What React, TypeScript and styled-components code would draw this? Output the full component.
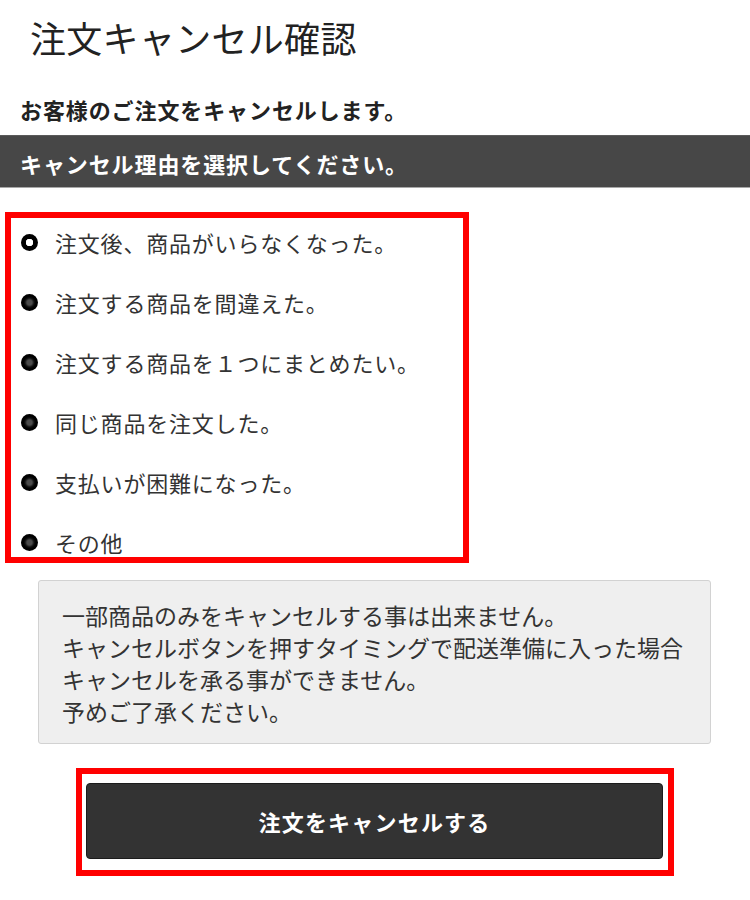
import styled, { createGlobalStyle } from "styled-components";

const GlobalStyle = createGlobalStyle`
    body {
        margin: 0;
        background: #ffffff;
        font-family: "Noto Sans CJK JP", "Noto Sans", sans-serif;
        color: #333333;
    }
`;

const Page = styled.div`
    width: 750px;
    display: flex;
    flex-direction: column;
`;

const Title = styled.h1`
    margin: 0;
    padding-left: 30px;
    font-size: 36px;
    font-weight: 400;
    line-height: 74px;
    letter-spacing: 0.3px;
    color: #222222;
`;

const Lead = styled.p`
    margin: 20px 0 11px;
    padding-left: 20px;
    font-size: 22px;
    font-weight: 700;
    line-height: 30px;
    letter-spacing: 0.9px;
    color: #222222;
`;

const SectionBar = styled.div`
    height: 53px;
    display: flex;
    align-items: center;
    padding: 3px 0 0 20px;
    background: #474747;
    border-top: 1px solid #5a5a5a;
    border-bottom: 1px solid #a8a8a8;
    box-sizing: border-box;
    color: #ffffff;
    font-size: 22px;
    font-weight: 700;
    letter-spacing: 0.9px;
`;

const Highlight = styled.div<{ $left: number; $width: number; $top: number }>`
    margin: ${(p) => p.$top}px 0 0 ${(p) => p.$left}px;
    width: ${(p) => p.$width}px;
    border: 6px solid #ff0000;
    box-sizing: border-box;
`;

const ReasonList = styled.div`
    display: flex;
    flex-direction: column;
    gap: 30px;
    padding: 9px 0 0 10px;
`;

const Reason = styled.label`
    height: 30px;
    display: flex;
    align-items: center;
    gap: 17px;
    font-size: 22px;
    line-height: 30px;
    letter-spacing: 0.8px;
    color: #333333;
    cursor: pointer;
`;

const Radio = styled.span<{ $checked?: boolean }>`
    width: 17px;
    height: 17px;
    border-radius: 50%;
    flex-shrink: 0;
    box-sizing: border-box;
    background: ${(p) =>
        p.$checked
            ? "radial-gradient(circle, #ffffff 0 3.5px, #000000 4px)"
            : "radial-gradient(circle, #4a4a4a 0 2.5px, #111111 4.5px, #000000 6px)"};
`;

const Notice = styled.div`
    margin: 17px 0 0 38px;
    width: 673px;
    height: 164px;
    box-sizing: border-box;
    padding: 18px 0 0 23px;
    background: #efefef;
    border: 1px solid #d2d2d2;
    border-radius: 3px;
    font-size: 23px;
    line-height: 32px;
    color: #333333;
`;

const ButtonArea = styled.div`
    padding: 9px 0 11px 4px;
`;

const CancelButton = styled.button`
    width: 577px;
    height: 76px;
    background: #333333;
    border: 1px solid #1c1c1c;
    border-radius: 4px;
    color: #ffffff;
    font-family: "Noto Sans CJK JP", "Noto Sans", sans-serif;
    font-size: 22px;
    font-weight: 700;
    letter-spacing: 1.2px;
    cursor: pointer;
`;

const reasons = [
    "注文後、商品がいらなくなった。",
    "注文する商品を間違えた。",
    "注文する商品を１つにまとめたい。",
    "同じ商品を注文した。",
    "支払いが困難になった。",
    "その他",
];

export default function App() {
    return (
        <>
            <GlobalStyle />
            <Page>
                <Title>注文キャンセル確認</Title>
                <Lead>お客様のご注文をキャンセルします。</Lead>
                <SectionBar>キャンセル理由を選択してください。</SectionBar>

                <Highlight $left={5} $width={464} $top={24}>
                    <ReasonList>
                        {reasons.map((r, i) => (
                            <Reason key={r}>
                                <Radio $checked={i === 0} />
                                {r}
                            </Reason>
                        ))}
                    </ReasonList>
                </Highlight>

                <Notice>
                    一部商品のみをキャンセルする事は出来ません。
                    <br />
                    キャンセルボタンを押すタイミングで配送準備に入った場合
                    <br />
                    キャンセルを承る事ができません。
                    <br />
                    予めご了承ください。
                </Notice>

                <Highlight $left={76} $width={598} $top={24}>
                    <ButtonArea>
                        <CancelButton>注文をキャンセルする</CancelButton>
                    </ButtonArea>
                </Highlight>
            </Page>
        </>
    );
}
